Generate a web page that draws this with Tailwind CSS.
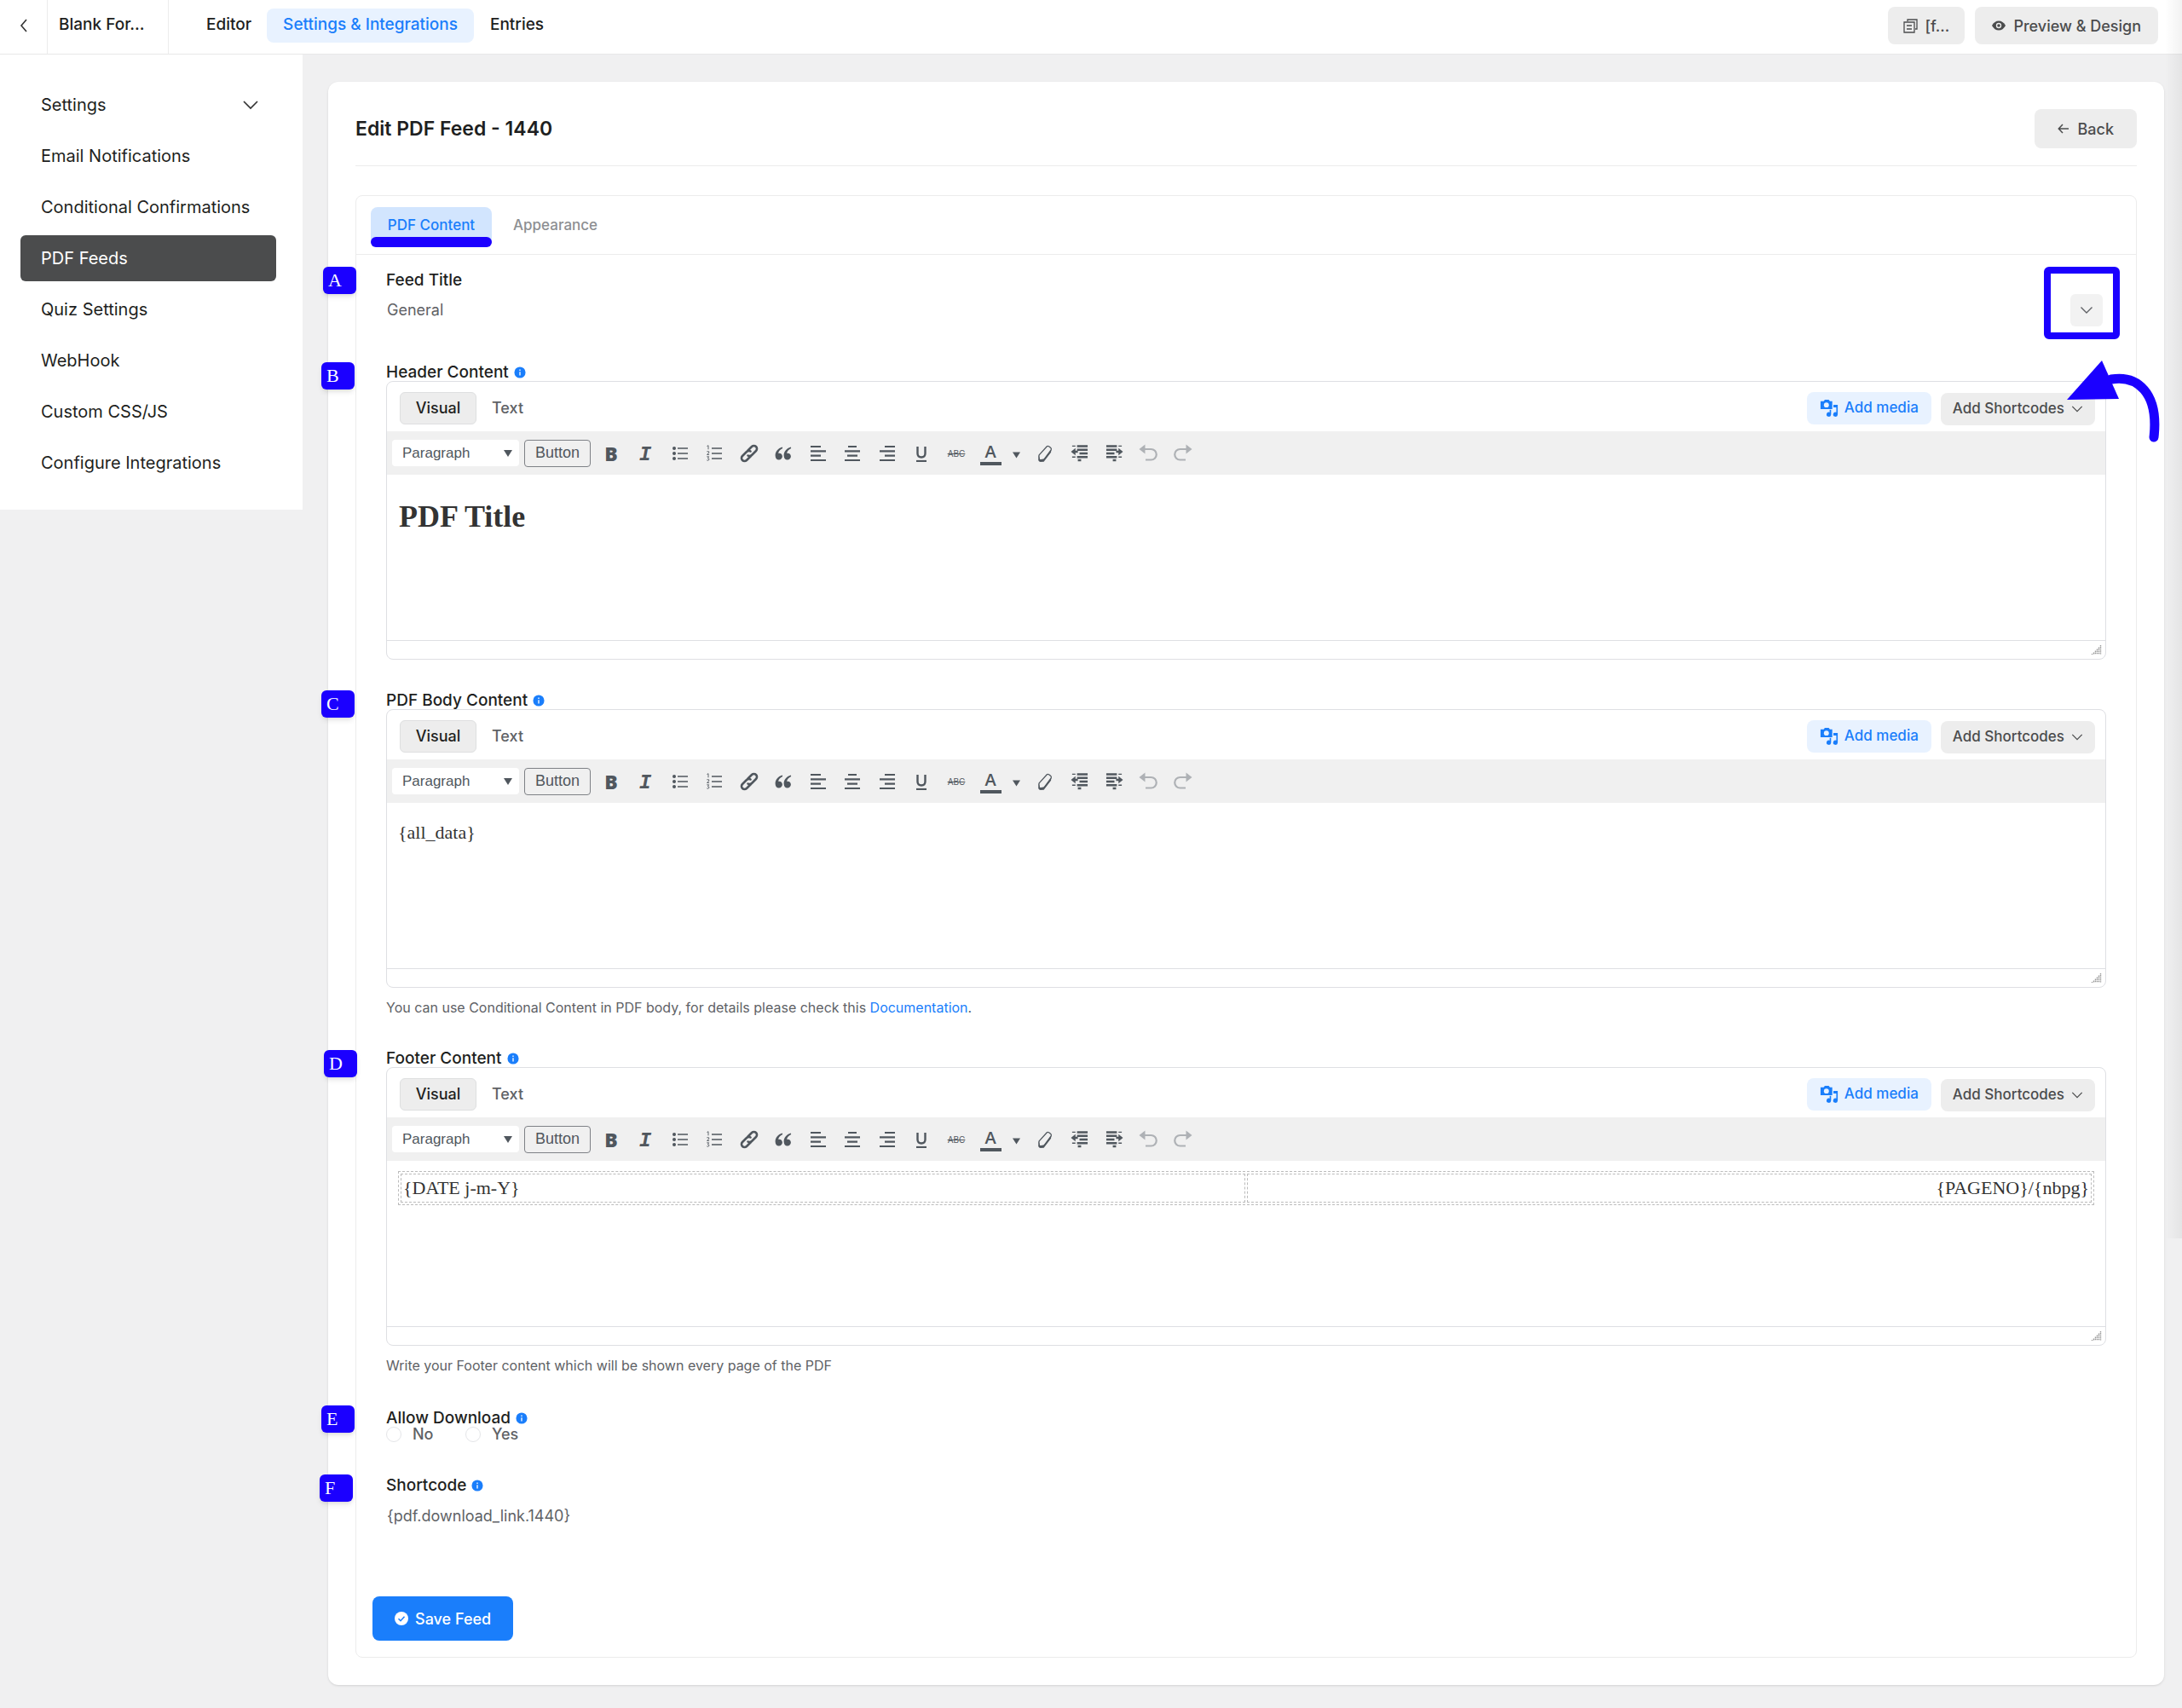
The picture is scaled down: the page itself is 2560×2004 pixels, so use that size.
<!DOCTYPE html>
<html lang="en">
<head>
<meta charset="utf-8">
<meta name="viewport" content="width=device-width, initial-scale=1">
<title>Edit PDF Feed - 1440</title>
<script src="https://cdn.jsdelivr.net/npm/@tailwindcss/browser@4"></script>
</head>
<body class="relative min-h-screen bg-[#f0f0f1] font-['Inter',sans-serif] text-[#1e1f21]">

<!-- Shared icons -->
<svg class="hidden" aria-hidden="true">
  <symbol id="chevron" viewBox="0 0 16 16"><path d="M1.500 4.500l6.500 6.500 6.500-6.500" fill="none" stroke="currentColor" stroke-width="1.400"/></symbol>
  <symbol id="info" viewBox="0 0 16 16"><circle cx="8" cy="8" r="7.5" fill="#1a7efb"/><path d="M8 7v5M8 4v1.6" stroke="#fff" stroke-width="1.5"/></symbol>
  <symbol id="bullets" viewBox="0 0 20 20"><g fill="currentColor"><circle cx="3" cy="4" r="2"/><circle cx="3" cy="10" r="2"/><circle cx="3" cy="16" r="2"/></g><path d="M7 4h12M7 10h12M7 16h12" stroke="currentColor" stroke-width="1.4"/></symbol>
  <symbol id="numbers" viewBox="0 0 20 20"><path d="M7 4h12M7 10h12M7 16h12" stroke="currentColor" stroke-width="1.4"/><path d="M1.5 1.500l1.500-.8v4.600M1.300 7.800h2.400v1.600l-2.200 2h2.600M1.300 13.800h2.400l-1.300 1.900q1.900 0 1.500 1.700q-.9 1.400-2.600.5" fill="none" stroke="currentColor" stroke-width=".9"/></symbol>
  <symbol id="link" viewBox="0 0 24 24"><g fill="none" stroke="currentColor" stroke-width="2.600" stroke-linecap="round"><path d="M10.500 8.500l4.500-4.500a3.500 3.500 0 0 1 5 5l-5 5a3.500 3.500 0 0 1-4.500.5"/><path d="M13.500 15.500l-4.500 4.500a3.500 3.500 0 0 1-5-5l5-5a3.500 3.500 0 0 1 4.500-.5"/></g></symbol>
  <symbol id="quote" viewBox="0 0 20 20"><path d="M8.800 2.500C3.500 4 .6 8 .6 12.500c0 3 1.700 5 4.200 5 2.300 0 4.100-1.700 4.100-4 0-2.300-1.600-3.800-3.800-3.800-.4 0-.7 0-1 .1C4.600 7.300 6.200 5.500 9.200 4.100z" fill="currentColor"/><path transform="translate(10)" d="M8.800 2.500C3.500 4 .6 8 .6 12.500c0 3 1.700 5 4.200 5 2.300 0 4.100-1.700 4.100-4 0-2.300-1.600-3.800-3.800-3.800-.4 0-.7 0-1 .1C4.600 7.300 6.200 5.500 9.200 4.100z" fill="currentColor"/></symbol>
  <symbol id="left" viewBox="0 0 20 20"><path d="M1 2h12M1 7.300h18M1 12.700h12M1 18h18" stroke="currentColor" stroke-width="2.200"/></symbol>
  <symbol id="center" viewBox="0 0 20 20"><path d="M5 2h10M1 7.300h18M4 12.700h12M1 18h18" stroke="currentColor" stroke-width="2.200"/></symbol>
  <symbol id="right" viewBox="0 0 20 20"><path d="M7 2h12M1 7.300h18M7 12.700h12M1 18h18" stroke="currentColor" stroke-width="2.200"/></symbol>
  <symbol id="eraser" viewBox="0 0 20 24"><path d="M2.500 14L12.500 3q1-1 2.500 0l2.500 2q1 1 .3 2.500L9 19.500l-6 2-.7-6z" fill="none" stroke="currentColor" stroke-width="1.400"/><path d="M2 14l1 5.500 5.500-.2 9.500-12-.3 3.200L8.500 22.500 4 23l-2.500-2z" fill="currentColor"/></symbol>
  <symbol id="outdent" viewBox="0 0 22 22"><path d="M8 2.500h13M8 7h13M11 11.500h10M8 16h13" stroke="currentColor" stroke-width="2.600"/><path d="M2 2.500h4M2 16h4" stroke="currentColor" stroke-width="1.500"/><path d="M9 20h4M4 9.500h5" stroke="currentColor" stroke-width="2.600"/><path d="M.5 9.500L6 5v9z" fill="currentColor"/></symbol>
  <symbol id="indent" viewBox="0 0 22 22"><path d="M1 2.500h13M1 7h13M1 11.500h10M1 16h13" stroke="currentColor" stroke-width="2.600"/><path d="M16 2.500h4M16 16h4" stroke="currentColor" stroke-width="1.500"/><path d="M9 20h4M13 9.500h5" stroke="currentColor" stroke-width="2.600"/><path d="M21.500 9.500L16 5v9z" fill="currentColor"/></symbol>
  <symbol id="undo" viewBox="0 0 22 22"><path d="M6 6h8.500a6 6 0 0 1 0 12.500H8" fill="none" stroke="currentColor" stroke-width="2.200"/><path d="M.5 6L7.500.5v11z" fill="currentColor"/></symbol>
  <symbol id="redo" viewBox="0 0 22 22"><path d="M16 6H7.500a6 6 0 0 0 0 12.500H14" fill="none" stroke="currentColor" stroke-width="2.200"/><path d="M21.500 6L14.500.5v11z" fill="currentColor"/></symbol>
  <symbol id="media" viewBox="0 0 24 24"><path d="M3 3h2l1.500-2h5L13 3h3v10H1V3z" fill="currentColor"/><circle cx="8.500" cy="7.800" r="3.200" fill="#e8f2ff"/><path d="M17.500 7.500H23V20a2.900 2.900 0 1 1-1.800-2.800V11h-3.700z" fill="currentColor"/><path d="M14.500 14v6a2.900 2.900 0 1 1-1.800-2.800V14z" fill="currentColor"/></symbol>
  <symbol id="grip" viewBox="0 0 13 13"><path d="M11.500 1v11M9.500 3.500V12M7.500 5.500V12M5.500 7.500V12M3.500 9.500V12M1.500 11v1" stroke="#999" stroke-width="1.400" stroke-dasharray="1.400 .7"/></symbol>
</svg>

<!-- Top bar -->
<header class="flex h-16 items-stretch border-b border-[#e8e8e8] bg-white pr-7 text-[19px] font-medium">
  <a href="#" aria-label="Back to forms" class="flex w-14 items-center justify-center border-r border-[#ececec] pb-1">
    <svg class="h-4 w-4" viewBox="0 0 16 16"><path d="M11 1L5 8l6 7" fill="none" stroke="#333" stroke-width="1.600"/></svg>
  </a>
  <div class="flex w-[142px] items-center border-r border-[#ececec] pb-1 pl-[13px]">Blank For...</div>
  <nav class="flex items-center pb-1 pl-[26px]">
    <a href="#" class="px-[18px]">Editor</a>
    <a href="#" class="flex h-10 items-center rounded-lg bg-[#e8f2ff] px-[19px] text-[#1a7efb]">Settings &amp; Integrations</a>
    <a href="#" class="px-[19px]">Entries</a>
  </nav>
  <div class="ml-auto flex items-center gap-3 pb-[3px] text-[18px] text-[#4b4c4d]">
    <button type="button" class="flex h-11 w-[90px] items-center gap-2 rounded-lg bg-[#ededed] pl-[18px]">
      <svg class="h-[17px] w-[17px]" viewBox="0 0 17 17" fill="none" stroke="currentColor" stroke-width="1.300"><path d="M5 3V1h11v11h-2"/><path d="M1 4h12v12H1zM4 8h6M4 12h6"/></svg>
      <span>[f...</span>
    </button>
    <button type="button" class="flex h-11 items-center gap-[9px] rounded-lg bg-[#ededed] px-5">
      <svg class="h-4 w-4" viewBox="0 0 16 16"><path d="M0 8q3-5.500 8-5.500T16 8q-3 5.500-8 5.500T0 8z" fill="currentColor"/><circle cx="8" cy="8" r="3.200" fill="#ededed"/><circle cx="8" cy="8" r="1.800" fill="currentColor"/></svg>
      <span>Preview &amp; Design</span>
    </button>
  </div>
</header>

<div class="flex items-start">
  <!-- Settings menu -->
  <nav class="flex w-[355px] shrink-0 flex-col gap-[6px] bg-white pt-8 pr-[31px] pb-7 pl-6 text-[20px]">
    <a href="#" class="flex h-[54px] items-center justify-between px-6">Settings
      <svg class="-mr-1 h-5 w-5" viewBox="0 0 20 20"><path d="M2 6l8 8 8-8" fill="none" stroke="#333" stroke-width="1.700"/></svg>
    </a>
    <a href="#" class="flex h-[54px] items-center px-6">Email Notifications</a>
    <a href="#" class="flex h-[54px] items-center px-6">Conditional Confirmations</a>
    <a href="#" aria-current="page" class="flex h-[54px] items-center rounded-md bg-[#4b4c4d] px-6 text-white">PDF Feeds</a>
    <a href="#" class="flex h-[54px] items-center px-6">Quiz Settings</a>
    <a href="#" class="flex h-[54px] items-center px-6">WebHook</a>
    <a href="#" class="flex h-[54px] items-center px-6">Custom CSS/JS</a>
    <a href="#" class="flex h-[54px] items-center px-6">Configure Integrations</a>
  </nav>

  <!-- Feed card -->
  <main class="mt-8 mr-[21px] mb-7 ml-[30px] min-w-0 grow rounded-xl bg-white px-8 pt-8 pb-8 shadow-sm">
    <div class="flex h-[67px] items-start justify-between border-b border-[#ececec]">
      <h1 class="text-[23px] leading-[47px] font-semibold">Edit PDF Feed - 1440</h1>
      <button type="button" class="flex h-[46px] items-center gap-[10px] rounded-lg bg-[#ededed] px-[27px] text-[18px] font-medium text-[#4b4c4d]">
        <svg class="h-[14px] w-[14px]" viewBox="0 0 14 14"><path d="M13 7H1.500M6 2L1.300 7 6 12" fill="none" stroke="currentColor" stroke-width="1.500"/></svg>
        Back
      </button>
    </div>

    <section class="mt-[34px] rounded-lg border border-[#ececec]">
      <div role="tablist" class="flex h-[69px] items-start border-b border-[#ececec] pt-[13px] pl-[17px] text-[17px] font-medium">
        <button type="button" role="tab" aria-selected="true" class="relative h-[47px] w-[142px] rounded-lg bg-[#d2e5fe] pb-[3px] text-[#1a7efb]">PDF Content
          <span class="absolute inset-x-0 bottom-0 h-3 rounded-md bg-[#1b00ff]"></span>
        </button>
        <button type="button" role="tab" aria-selected="false" class="h-[44px] px-[25px] text-[#8d8f92]">Appearance</button>
      </div>

      <form class="relative pt-4 pr-[35px] pb-[19px] pl-[35px]">
        <!-- Feed title -->
        <div class="relative h-[112px]">
          <label for="title" class="block text-[19px] leading-7 font-medium">Feed Title</label>
          <div class="flex items-start">
            <input id="title" value="General" class="mt-[5px] h-[30px] min-w-0 grow bg-transparent pl-px text-[18px] text-[#606266]">
            <button type="button" aria-label="Feed title options" class="mt-[2px] mr-1 flex h-[38px] w-[38px] items-center justify-center rounded-md bg-[#f2f2f2]"><svg class="h-4 w-4 text-[#606266]"><use href="#chevron"/></svg></button>
          </div>
          <span class="absolute -top-[2px] -left-[74px] h-8 w-[39px] rounded-md bg-[#1b00ff] pl-[6px] font-['Liberation_Serif',serif] text-[22px] leading-[31px] text-white shadow-md">A</span>
          <span class="absolute -top-[2px] -right-4 h-[85px] w-[89px] rounded-md border-8 border-[#1b00ff]"></span>
        </div>

        <!-- Header content -->
        <div class="relative mb-[38px]">
          <div class="flex h-5 items-center gap-[6px] text-[19px] leading-5 font-medium"><span>Header Content</span><svg class="h-[14px] w-[14px]"><use href="#info"/></svg></div>
          <div class="rounded-lg border border-[#dedfe3]">
            <div data-editor-head></div>
            <div class="h-[194px] px-[14px] pt-[29px] font-['Liberation_Serif',serif] text-[#333]"><h2 class="text-[36px] leading-10 font-bold">PDF Title</h2></div>
            <div class="flex h-[22px] items-end justify-end border-t border-[#dedfe3] pr-1 pb-1"><svg class="h-[13px] w-[13px]"><use href="#grip"/></svg></div>
          </div>
          <span class="absolute -top-[2px] -left-[76px] h-8 w-[39px] rounded-md bg-[#1b00ff] pl-[6px] font-['Liberation_Serif',serif] text-[22px] leading-[31px] text-white shadow-md">B</span>
        </div>

        <!-- Body content -->
        <div class="relative mb-[38px]">
          <div class="flex h-5 items-center gap-[6px] text-[19px] leading-5 font-medium"><span>PDF Body Content</span><svg class="h-[14px] w-[14px]"><use href="#info"/></svg></div>
          <div class="rounded-lg border border-[#dedfe3]">
            <div data-editor-head></div>
            <div class="h-[194px] px-[13px] pt-5 font-['Liberation_Serif',serif] text-[22px] leading-[30px] text-[#333]">{all_data}</div>
            <div class="flex h-[22px] items-end justify-end border-t border-[#dedfe3] pr-1 pb-1"><svg class="h-[13px] w-[13px]"><use href="#grip"/></svg></div>
          </div>
          <p class="mt-[11px] text-[16px] leading-6 text-[#606266]">You can use Conditional Content in PDF body, for details please check this <a href="#" class="text-[#1a7efb]">Documentation</a>.</p>
          <span class="absolute -top-[2px] -left-[76px] h-8 w-[39px] rounded-md bg-[#1b00ff] pl-[6px] font-['Liberation_Serif',serif] text-[22px] leading-[31px] text-white shadow-md">C</span>
        </div>

        <!-- Footer content -->
        <div class="relative mb-10">
          <div class="flex h-5 items-center gap-[6px] text-[19px] leading-5 font-medium"><span>Footer Content</span><svg class="h-[14px] w-[14px]"><use href="#info"/></svg></div>
          <div class="rounded-lg border border-[#dedfe3]">
            <div data-editor-head></div>
            <div class="h-[194px] px-[13px] pt-3 font-['Liberation_Serif',serif] text-[22px] leading-[30px] text-[#333]">
              <table class="w-full table-fixed border-separate border-spacing-[2px] border border-dashed border-[#bbb]">
                <tr>
                  <td class="border border-dashed border-[#bbb] px-[2px] py-px">{DATE j-m-Y}</td>
                  <td class="border border-dashed border-[#bbb] px-[2px] py-px text-right">{PAGENO}/{nbpg}</td>
                </tr>
              </table>
            </div>
            <div class="flex h-[22px] items-end justify-end border-t border-[#dedfe3] pr-1 pb-1"><svg class="h-[13px] w-[13px]"><use href="#grip"/></svg></div>
          </div>
          <p class="mt-[11px] text-[16px] leading-6 text-[#606266]">Write your Footer content which will be shown every page of the PDF</p>
          <span class="absolute top-0 -left-[73px] h-8 w-[39px] rounded-md bg-[#1b00ff] pl-[6px] font-['Liberation_Serif',serif] text-[22px] leading-[31px] text-white shadow-md">D</span>
        </div>

        <!-- Allow download -->
        <div class="relative mb-[39px]">
          <fieldset>
            <legend class="flex h-5 items-center gap-[6px] text-[19px] leading-5 font-medium"><span>Allow Download</span><svg class="h-[14px] w-[14px]"><use href="#info"/></svg></legend>
            <div class="flex h-[18px] items-center text-[18px] leading-5 font-medium text-[#606266]">
              <label class="flex w-[93px] items-center gap-[13px]"><input type="radio" name="dl" class="h-[18px] w-[18px] appearance-none rounded-full border border-[#e4e5e8] bg-white">No</label>
              <label class="flex items-center gap-[13px]"><input type="radio" name="dl" class="h-[18px] w-[18px] appearance-none rounded-full border border-[#e4e5e8] bg-white">Yes</label>
            </div>
          </fieldset>
          <span class="absolute -top-[5px] -left-[76px] h-8 w-[39px] rounded-md bg-[#1b00ff] pl-[6px] font-['Liberation_Serif',serif] text-[22px] leading-[31px] text-white shadow-md">E</span>
        </div>

        <!-- Shortcode -->
        <div class="relative h-[142px]">
          <div class="flex h-6 items-center gap-[6px] text-[19px] leading-5 font-medium"><label for="code">Shortcode</label><svg class="h-[14px] w-[14px]"><use href="#info"/></svg></div>
          <input id="code" readonly value="{pdf.download_link.1440}" class="mt-2 h-[30px] w-full bg-transparent pl-px text-[18px] text-[#606266]">
          <span class="absolute -top-[1px] -left-[78px] h-8 w-[39px] rounded-md bg-[#1b00ff] pl-[6px] font-['Liberation_Serif',serif] text-[22px] leading-[31px] text-white shadow-md">F</span>
        </div>

        <button type="submit" class="-ml-4 flex h-[52px] items-center gap-2 rounded-lg bg-[#1a7efb] px-[26px] text-[18px] font-medium text-white">
          <svg class="h-4 w-4" viewBox="0 0 16 16"><circle cx="8" cy="8" r="8" fill="#fff"/><path d="M4.500 8.300L7 10.700l4.500-4.900" fill="none" stroke="#1a7efb" stroke-width="1.500"/></svg>
          Save Feed
        </button>

        <!-- Pointer drawn over the shortcode menu -->
        <svg class="pointer-events-none absolute top-[121px] -right-[29px] h-[102px] w-[112px]" viewBox="0 0 112 102"><path d="M54 25C84 20 110 40 104 93" fill="none" stroke="#1b00ff" stroke-width="11" stroke-linecap="round"/><path d="M2 49L43 3l20 45z" fill="#1b00ff"/></svg>
      </form>
    </section>
  </main>
</div>

<div class="pointer-events-none absolute top-0 right-0 h-[1453px] w-5 bg-linear-to-l from-black/5 to-transparent"></div>

<template id="editor-head">
  <div class="flex h-[58px] items-center pt-[3px] pr-3 pl-[15px] font-medium">
    <button type="button" class="h-[38px] w-[90px] rounded-md border border-[#dedfe0] bg-[#ededed] text-[18px]">Visual</button>
    <button type="button" class="h-[38px] px-[18px] text-[18px] text-[#606266]">Text</button>
    <button type="button" class="ml-auto flex h-[38px] items-center gap-[7px] rounded-lg bg-[#e8f2ff] px-[15px] text-[17px] text-[#1a7efb]"><svg class="h-[22px] w-[22px]"><use href="#media"/></svg>Add media</button>
    <button type="button" class="mt-[2px] ml-[11px] flex h-[38px] items-center gap-2 rounded-lg bg-[#ededed] px-[14px] text-[17px] text-[#4b4c4d]">Add Shortcodes<svg class="h-[14px] w-[14px]"><use href="#chevron"/></svg></button>
  </div>
  <div class="flex h-[51px] items-center bg-[#f0f0f0] pl-[6px] text-[#50575e]">
    <div class="relative">
      <select aria-label="Block format" class="h-[31px] w-[149px] appearance-none rounded-sm bg-white pl-3 font-['Liberation_Sans',sans-serif] text-[17px]"><option>Paragraph</option></select>
      <svg class="pointer-events-none absolute top-3 right-2 h-2 w-[10px]" viewBox="0 0 10 8"><path d="M0 0h10L5 8z" fill="currentColor"/></svg>
    </div>
    <button type="button" class="ml-[6px] h-8 w-[78px] rounded-sm border border-[#7e8186] font-['Liberation_Sans',sans-serif] text-[18px]">Button</button>
    <div class="ml-1 flex gap-px">
      <div class="flex">
        <button type="button" aria-label="Bold" class="h-8 w-10 font-['Open_Sans',sans-serif] text-[23px] leading-8 font-extrabold">B</button>
        <button type="button" aria-label="Italic" class="h-8 w-10 font-['Liberation_Mono',monospace] text-[24px] leading-9 font-bold italic">I</button>
      </div>
      <div class="flex">
        <button type="button" aria-label="Bulleted list" class="grid h-8 w-10 place-items-center"><svg class="h-5 w-5"><use href="#bullets"/></svg></button>
        <button type="button" aria-label="Numbered list" class="grid h-8 w-10 place-items-center"><svg class="h-5 w-5"><use href="#numbers"/></svg></button>
      </div>
      <div class="flex">
        <button type="button" aria-label="Link" class="grid h-8 w-10 place-items-center"><svg class="h-6 w-6"><use href="#link"/></svg></button>
        <button type="button" aria-label="Blockquote" class="grid h-8 w-10 place-items-center"><svg class="h-5 w-5"><use href="#quote"/></svg></button>
      </div>
      <div class="flex">
        <button type="button" aria-label="Align left" class="grid h-8 w-10 place-items-center"><svg class="h-5 w-5"><use href="#left"/></svg></button>
        <button type="button" aria-label="Align center" class="grid h-8 w-10 place-items-center"><svg class="h-5 w-5"><use href="#center"/></svg></button>
      </div>
      <div class="flex">
        <button type="button" aria-label="Align right" class="grid h-8 w-10 place-items-center"><svg class="h-5 w-5"><use href="#right"/></svg></button>
        <button type="button" aria-label="Underline" class="grid h-8 w-10 place-items-center"><svg class="h-5 w-5" viewBox="0 0 20 20"><path d="M5.500 2v8q0 4.500 4.500 4.500t4.500-4.500V2" fill="none" stroke="currentColor" stroke-width="2.400"/><path d="M4 19h12" stroke="currentColor" stroke-width="2.200"/></svg></button>
      </div>
      <div class="flex">
        <button type="button" aria-label="Strikethrough" class="h-8 w-10 text-[10px] leading-8 line-through">ABC</button>
        <button type="button" aria-label="Text color" class="flex h-8 w-10 flex-col items-center pt-1"><span class="font-['Open_Sans',sans-serif] text-[20px] leading-5 font-semibold">A</span><span class="mt-[2px] h-1 w-[25px] bg-[#50575e]"></span></button>
      </div>
    </div>
    <button type="button" aria-label="Choose text color" class="grid h-8 w-5 place-items-center pt-1"><svg class="h-2 w-[9px]" viewBox="0 0 10 8"><path d="M0 0h10L5 8z" fill="currentColor"/></svg></button>
    <div class="ml-1 flex gap-px">
      <div class="flex">
        <button type="button" aria-label="Clear formatting" class="grid h-8 w-10 place-items-center"><svg class="h-[22px] w-5"><use href="#eraser"/></svg></button>
        <button type="button" aria-label="Decrease indent" class="grid h-8 w-10 place-items-center"><svg class="h-[21px] w-[21px]"><use href="#outdent"/></svg></button>
      </div>
      <div class="flex">
        <button type="button" aria-label="Increase indent" class="grid h-8 w-10 place-items-center"><svg class="h-[21px] w-[21px]"><use href="#indent"/></svg></button>
        <button type="button" aria-label="Undo" class="grid h-8 w-10 place-items-center text-[#aeb1b5]"><svg class="h-[22px] w-[22px]"><use href="#undo"/></svg></button>
      </div>
      <button type="button" aria-label="Redo" class="grid h-8 w-10 place-items-center text-[#aeb1b5]"><svg class="h-[22px] w-[22px]"><use href="#redo"/></svg></button>
    </div>
  </div>
</template>
<script>
  const head = document.getElementById('editor-head');
  document.querySelectorAll('[data-editor-head]').forEach(slot => slot.append(head.content.cloneNode(true)));
</script>
</body>
</html>
